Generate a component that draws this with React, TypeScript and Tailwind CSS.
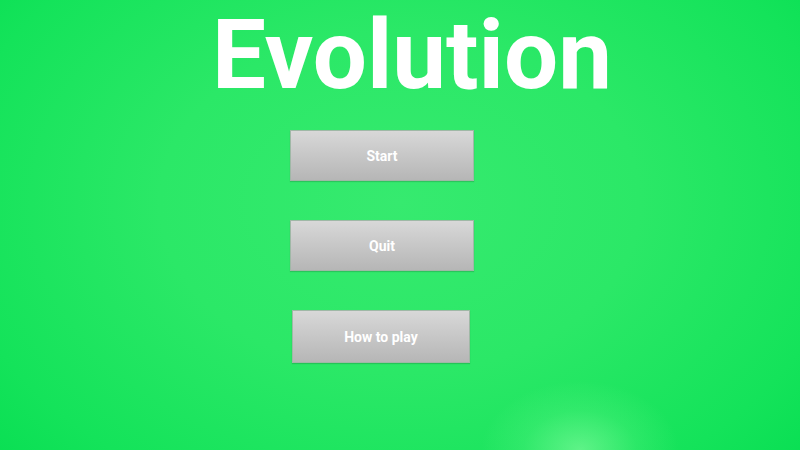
export default function App() {
  return (
    <div
      className="relative w-[800px] h-[450px] overflow-hidden bg-[radial-gradient(ellipse_75%_95%_at_50%_45%,#36ea6f_0%,#2be867_40%,#14e35a_75%,#02dc4e_100%)]"
      style={{ fontFamily: "Roboto, 'Liberation Sans', sans-serif" }}
    >
      {/* soft light spot near the bottom edge */}
      <div className="absolute left-[480px] top-[380px] w-[200px] h-[140px] rounded-full bg-[radial-gradient(ellipse_at_center,rgba(150,255,170,0.55)_0%,rgba(120,250,150,0.2)_40%,rgba(80,240,120,0)_70%)]" />
      <div className="relative flex flex-col items-start">
        <h1 className="ml-[212px] pt-[8px] text-[96px] leading-[95px] font-bold text-white">Evolution</h1>
        <div className="mt-[27px] ml-[290px] w-[184px] flex flex-col items-start gap-[39px]">
          <button className="w-[184px] h-[51px] flex items-center justify-center border border-[#9fb8a6] bg-gradient-to-b from-[#d8d8d8] to-[#b6b6b6] text-white text-[14px] font-bold shadow-[0_1px_1px_rgba(0,0,0,0.15)]">
            <span className="pt-[1px]">Start</span>
          </button>
          <button className="w-[184px] h-[51px] flex items-center justify-center border border-[#9fb8a6] bg-gradient-to-b from-[#d8d8d8] to-[#b6b6b6] text-white text-[14px] font-bold shadow-[0_1px_1px_rgba(0,0,0,0.15)]">
            <span className="pt-[1px]">Quit</span>
          </button>
          <button className="ml-[2px] w-[178px] h-[53px] flex items-center justify-center border border-[#9fb8a6] bg-gradient-to-b from-[#d8d8d8] to-[#b6b6b6] text-white text-[14px] font-bold shadow-[0_1px_1px_rgba(0,0,0,0.15)]">
            <span className="pt-[1px]">How to play</span>
          </button>
        </div>
      </div>
    </div>
  );
}
